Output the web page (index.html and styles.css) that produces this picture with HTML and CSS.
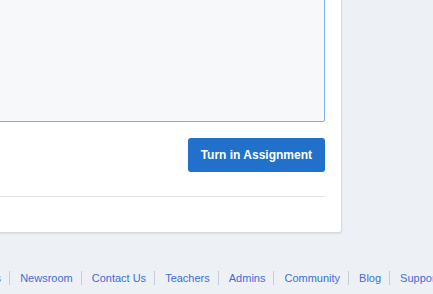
FILE: index.html
```html
<!doctype html>
<html lang="en">
    <head>
        <meta charset="UTF-8" />
        <meta name="viewport" content="width=device-width, initial-scale=1.0" />
        <title>Assignment</title>
        <link rel="stylesheet" href="styles.css">
    </head>
    <body>
        <div class="card">
            <textarea class="answer" aria-label="Your answer"></textarea>

            <div class="actions">
                <button type="button" class="submit-btn">Turn in Assignment</button>
            </div>

            <hr class="divider" />
        </div>

        <nav class="footer-links">
            <a href="#">Careers</a>
            <a href="#">Newsroom</a>
            <a href="#">Contact Us</a>
            <a href="#">Teachers</a>
            <a href="#">Admins</a>
            <a href="#">Community</a>
            <a href="#">Blog</a>
            <a href="#">Support</a>
        </nav>
    </body>
</html>
```

FILE: styles.css
```css
* {
    font-family: 'Liberation Sans', Arial, Helvetica, sans-serif;
    margin: 0;
    padding: 0;
    box-sizing: border-box;
}

body {
    background-color: #edf0f5;
    overflow: hidden;
}

.card {
    width: 382px;
    margin-top: -21px;
    margin-left: -40px;
    padding: 16px 16px 35px;
    background-color: white;
    border: 1px solid #d5dae1;
    border-radius: 3px;
    box-shadow: 0 1px 2px rgba(0, 0, 0, 0.08);
}

.answer {
    display: block;
    width: 100%;
    height: 126px;
    background-color: #f7f8fa;
    border: 1px solid #80aee6;
    border-radius: 2px;
    resize: none;
}

.actions {
    display: flex;
    justify-content: flex-end;
    margin-top: 16px;
}

.submit-btn {
    height: 34px;
    padding: 0 13px;
    background-color: #2170c9;
    color: white;
    border: none;
    border-radius: 3px;
    font-size: 12px;
    font-weight: 700;
    cursor: pointer;
}

.divider {
    margin-top: 24px;
    border: none;
    border-top: 1px solid #dfe3e8;
}

/* Footer */
.footer-links {
    display: flex;
    margin-top: 38px;
    margin-left: -48px;
    white-space: nowrap;
}

.footer-links a {
    padding: 0 8px 0 10px;
    font-size: 11px;
    line-height: 14px;
    color: #3f6fd4;
    text-decoration: none;
    border-left: 1px solid #c9cdd3;
}

.footer-links a:first-child {
    border-left: none;
}
```
